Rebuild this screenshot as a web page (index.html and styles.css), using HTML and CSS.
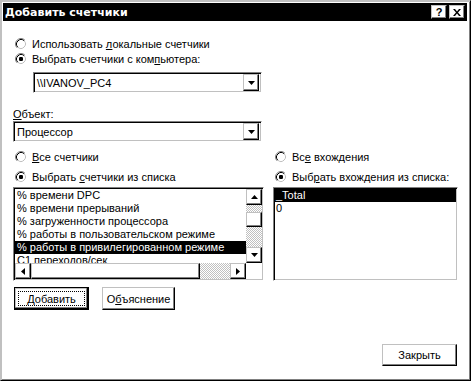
FILE: index.html
```html
<!DOCTYPE html>
<html lang="ru">
<head>
<meta charset="utf-8">
<title>Добавить счетчики</title>
<link rel="stylesheet" href="styles.css">
</head>
<body>
<div class="dialog">
  <div class="titlebar">
    <span class="title">Добавить счетчики</span>
    <div class="caption-btns">
      <span class="cap-btn">?</span>
      <span class="cap-btn"><svg width="8" height="7" viewBox="0 0 8 7"><path d="M0 0h2l2 2.5L6 0h2L5 3.5 8 7H6L4 4.5 2 7H0l3-3.5z" fill="#000"/></svg></span>
    </div>
  </div>
  <div class="content">
    <div class="top-radios">
      <label class="radio"><svg class="rb" width="12" height="12" viewBox="0 0 12 12"><circle cx="6" cy="6" r="5" fill="#fff"/><path d="M2.11 9.89A5.5 5.5 0 0 1 9.89 2.11" fill="none" stroke="#808080"/><path d="M2.82 9.18A4.5 4.5 0 0 1 9.18 2.82" fill="none" stroke="#000"/><path d="M9.18 2.82A4.5 4.5 0 0 1 2.82 9.18" fill="none" stroke="#c0c0c0"/></svg><span>Использовать <u>л</u>окальные счетчики</span></label>
      <label class="radio"><svg class="rb" width="12" height="12" viewBox="0 0 12 12"><circle cx="6" cy="6" r="5" fill="#fff"/><path d="M2.11 9.89A5.5 5.5 0 0 1 9.89 2.11" fill="none" stroke="#808080"/><path d="M2.82 9.18A4.5 4.5 0 0 1 9.18 2.82" fill="none" stroke="#000"/><path d="M9.18 2.82A4.5 4.5 0 0 1 2.82 9.18" fill="none" stroke="#c0c0c0"/><rect x="4" y="4" width="4" height="4" rx="1.2" fill="#000"/></svg><span>Выбрать счетчики с ком<u>п</u>ьютера:</span></label>
    </div>

    <div class="combo combo-computer">
      <span class="combo-text">\\IVANOV_PC4</span>
      <span class="drop-btn"><svg width="7" height="4" viewBox="0 0 7 4"><path d="M0 0h7L3.5 4z" fill="#000"/></svg></span>
    </div>

    <div class="label-obj"><u>О</u>бъект:</div>
    <div class="combo combo-object">
      <span class="combo-text">Процессор</span>
      <span class="drop-btn"><svg width="7" height="4" viewBox="0 0 7 4"><path d="M0 0h7L3.5 4z" fill="#000"/></svg></span>
    </div>

    <div class="columns">
      <div class="col col-left">
        <label class="radio"><svg class="rb" width="12" height="12" viewBox="0 0 12 12"><circle cx="6" cy="6" r="5" fill="#fff"/><path d="M2.11 9.89A5.5 5.5 0 0 1 9.89 2.11" fill="none" stroke="#808080"/><path d="M2.82 9.18A4.5 4.5 0 0 1 9.18 2.82" fill="none" stroke="#000"/><path d="M9.18 2.82A4.5 4.5 0 0 1 2.82 9.18" fill="none" stroke="#c0c0c0"/></svg><span><u>В</u>се счетчики</span></label>
        <label class="radio"><svg class="rb" width="12" height="12" viewBox="0 0 12 12"><circle cx="6" cy="6" r="5" fill="#fff"/><path d="M2.11 9.89A5.5 5.5 0 0 1 9.89 2.11" fill="none" stroke="#808080"/><path d="M2.82 9.18A4.5 4.5 0 0 1 9.18 2.82" fill="none" stroke="#000"/><path d="M9.18 2.82A4.5 4.5 0 0 1 2.82 9.18" fill="none" stroke="#c0c0c0"/><rect x="4" y="4" width="4" height="4" rx="1.2" fill="#000"/></svg><span>Выбрать <u>с</u>четчики из списка</span></label>
        <div class="listbox counters">
          <div class="list-main">
            <div class="list-items">
              <div class="item">% времени DPC</div>
              <div class="item">% времени прерываний</div>
              <div class="item">% загруженности процессора</div>
              <div class="item">% работы в пользовательском режиме</div>
              <div class="item selected">% работы в привилегированном режиме</div>
              <div class="item">C1 переходов/сек</div>
            </div>
            <div class="vscroll">
              <span class="sb-btn"><svg width="7" height="4" viewBox="0 0 7 4"><path d="M0 4h7L3.5 0z" fill="#000"/></svg></span>
              <span class="track track-a"></span>
              <span class="thumb thumb-v"></span>
              <span class="track track-b"></span>
              <span class="sb-btn"><svg width="7" height="4" viewBox="0 0 7 4"><path d="M0 0h7L3.5 4z" fill="#000"/></svg></span>
            </div>
          </div>
          <div class="hscroll">
            <span class="sb-btn"><svg width="4" height="7" viewBox="0 0 4 7"><path d="M4 0v7L0 3.5z" fill="#000"/></svg></span>
            <span class="thumb thumb-h"></span>
            <span class="track track-h"></span>
            <span class="sb-btn"><svg width="4" height="7" viewBox="0 0 4 7"><path d="M0 0v7l4-3.5z" fill="#000"/></svg></span>
            <span class="corner"></span>
          </div>
        </div>
      </div>
      <div class="col col-right">
        <label class="radio"><svg class="rb" width="12" height="12" viewBox="0 0 12 12"><circle cx="6" cy="6" r="5" fill="#fff"/><path d="M2.11 9.89A5.5 5.5 0 0 1 9.89 2.11" fill="none" stroke="#808080"/><path d="M2.82 9.18A4.5 4.5 0 0 1 9.18 2.82" fill="none" stroke="#000"/><path d="M9.18 2.82A4.5 4.5 0 0 1 2.82 9.18" fill="none" stroke="#c0c0c0"/></svg><span>Вс<u>е</u> вхождения</span></label>
        <label class="radio"><svg class="rb" width="12" height="12" viewBox="0 0 12 12"><circle cx="6" cy="6" r="5" fill="#fff"/><path d="M2.11 9.89A5.5 5.5 0 0 1 9.89 2.11" fill="none" stroke="#808080"/><path d="M2.82 9.18A4.5 4.5 0 0 1 9.18 2.82" fill="none" stroke="#000"/><path d="M9.18 2.82A4.5 4.5 0 0 1 2.82 9.18" fill="none" stroke="#c0c0c0"/><rect x="4" y="4" width="4" height="4" rx="1.2" fill="#000"/></svg><span>Выб<u>р</u>ать вхождения из списка:</span></label>
        <div class="listbox instances">
          <div class="list-items">
            <div class="item selected">_Total</div>
            <div class="item">0</div>
          </div>
        </div>
      </div>
    </div>

    <div class="buttons">
      <span class="btn btn-default"><span class="focus">Добавить</span></span>
      <span class="btn btn-explain">О<u>б</u>ъяснение</span>
    </div>

    <div class="footer">
      <span class="btn btn-close">Закрыть</span>
    </div>
  </div>
</div>
</body>
</html>
```
FILE: styles.css
```css
* { box-sizing: border-box; }
html, body {
  margin: 0;
  padding: 0;
  background: #fff;
}
body {
  font-family: "Liberation Sans", Arial, sans-serif;
  font-size: 11px;
  color: #000;
}
u { text-decoration: underline; text-underline-offset: 1px; }

.dialog {
  width: 471px;
  height: 381px;
  border: 1px solid;
  border-color: #c0c0c0 #000 #000 #c0c0c0;
  box-shadow: inset 1px 1px #c0c0c0, inset -1px -1px #808080;
  padding: 2px 3px 2px 2px;
  display: flex;
  flex-direction: column;
}

.titlebar {
  height: 18px;
  background: #000;
  color: #fff;
  display: flex;
  align-items: center;
  justify-content: space-between;
  padding: 0 2px 0 2px;
}
.title {
  font-family: "DejaVu Sans", "Liberation Sans", sans-serif;
  font-weight: bold;
  font-size: 11px;
  letter-spacing: 0;
}
.caption-btns {
  display: flex;
  gap: 2px;
}
.cap-btn {
  width: 16px;
  height: 14px;
  background: #fff;
  border: 1px solid;
  border-color: #c0c0c0 #000 #000 #c0c0c0;
  box-shadow: inset -1px -1px #808080;
  color: #000;
  font-weight: bold;
  font-size: 11px;
  display: flex;
  align-items: center;
  justify-content: center;
  line-height: 1;
}

.content {
  flex: 1;
  padding: 16px 10px 0 10px;
  display: flex;
  flex-direction: column;
}

.top-radios {
  display: flex;
  flex-direction: column;
  gap: 2px;
}
.radio {
  height: 13px;
  display: flex;
  align-items: center;
  gap: 5px;
  padding-left: 2px;
  white-space: nowrap;
}
.col .radio + .radio { margin-top: 7px; }
.rb { flex: none; }

.combo {
  height: 21px;
  display: flex;
  align-items: center;
  border: 1px solid;
  border-color: #808080 #fff #fff #808080;
  box-shadow: inset 1px 1px #000, inset -1px -1px #c0c0c0;
  padding: 2px 2px 2px 3px;
}
.combo-text { flex: 1; }
.combo-computer {
  margin-top: 7px;
  margin-left: 20px;
  width: 229px;
}
.combo-object {
  width: 249px;
}
.drop-btn {
  width: 16px;
  height: 17px;
  border: 1px solid;
  border-color: #c0c0c0 #000 #000 #c0c0c0;
  box-shadow: inset -1px -1px #808080;
  display: flex;
  align-items: center;
  justify-content: center;
  background: #fff;
}

.label-obj {
  margin-top: 15px;
  height: 13px;
  line-height: 13px;
}

.columns {
  margin-top: 8px;
  display: grid;
  grid-template-columns: 251px 185px;
  column-gap: 9px;
}
.col { display: flex; flex-direction: column; }

.listbox {
  margin-top: 4px;
  height: 94px;
  border: 1px solid;
  border-color: #808080 #fff #fff #808080;
  box-shadow: inset 1px 1px #000, inset -1px -1px #c0c0c0;
  padding: 1px;
  display: flex;
  flex-direction: column;
  overflow: hidden;
}
.list-main {
  flex: 1;
  display: flex;
  min-height: 0;
}
.list-items {
  flex: 1;
  overflow: hidden;
}
.item {
  height: 13px;
  line-height: 13px;
  padding-left: 2px;
  white-space: nowrap;
}
.item.selected {
  background: #000;
  color: #fff;
}

.vscroll {
  width: 16px;
  display: flex;
  flex-direction: column;
}
.sb-btn {
  flex: none;
  width: 16px;
  height: 16px;
  background: #fff;
  border: 1px solid;
  border-color: #c0c0c0 #000 #000 #c0c0c0;
  box-shadow: inset -1px -1px #808080;
  display: flex;
  align-items: center;
  justify-content: center;
}
.track {
  background-image: conic-gradient(#c0c0c0 25%, #fff 0 50%, #c0c0c0 0 75%, #fff 0);
  background-size: 2px 2px;
}
.track-a { height: 7px; flex: none; }
.track-b { flex: 1; }
.thumb {
  background: #fff;
  border: 1px solid;
  border-color: #c0c0c0 #000 #000 #c0c0c0;
  box-shadow: inset -1px -1px #808080;
  flex: none;
}
.thumb-v { height: 15px; }

.hscroll {
  height: 16px;
  display: flex;
  flex: none;
}
.thumb-h { width: 169px; }
.track-h { flex: 1; }
.corner { width: 16px; background: #fff; flex: none; }

.instances .item { padding-left: 1px; }

.buttons {
  margin-top: 6px;
  display: flex;
  gap: 13px;
  padding-left: 1px;
}
.btn {
  height: 23px;
  width: 75px;
  display: flex;
  align-items: center;
  justify-content: center;
  border: 1px solid;
  border-color: #c0c0c0 #000 #000 #c0c0c0;
  box-shadow: inset -1px -1px #808080;
  background: #fff;
  white-space: nowrap;
}
.btn-default {
  border: 1px solid #000;
  box-shadow: inset -1px -1px #000, inset -2px -2px #808080, inset 1px 1px #c0c0c0;
  padding: 3px;
}
.focus {
  flex: 1;
  align-self: stretch;
  display: flex;
  align-items: center;
  justify-content: center;
  outline: 1px dotted #000;
  outline-offset: -1px;
}
.btn-explain { width: 73px; }

.footer {
  margin-top: auto;
  margin-bottom: 12px;
  display: flex;
  justify-content: flex-end;
}
.btn-close { width: 75px; height: 22px; }
```
